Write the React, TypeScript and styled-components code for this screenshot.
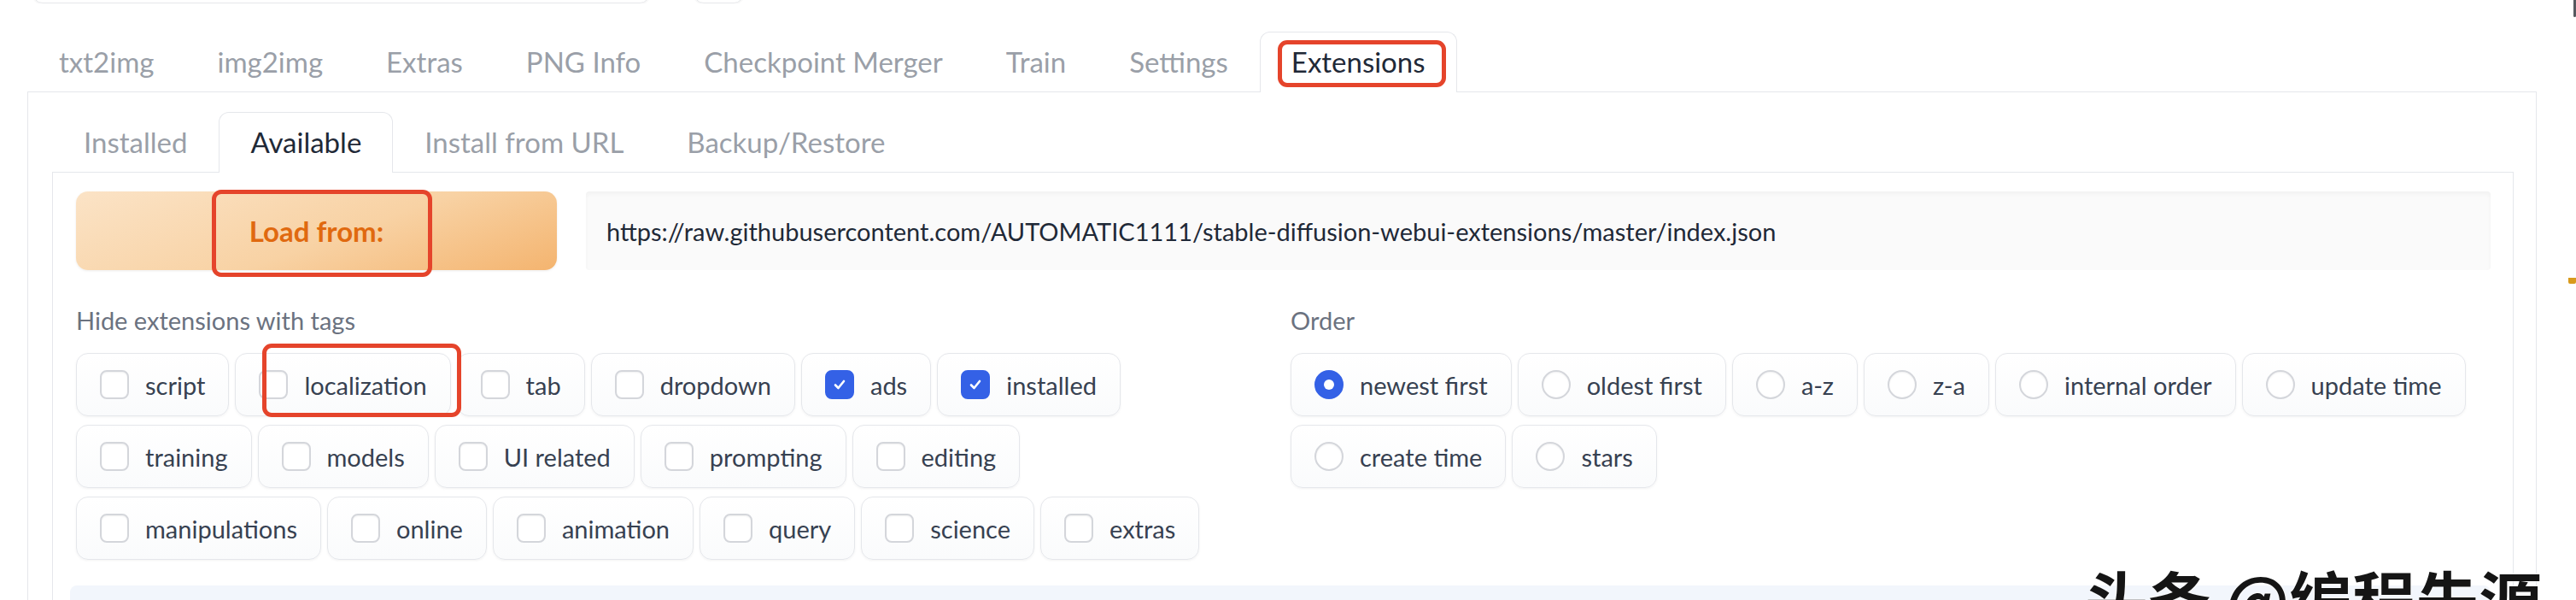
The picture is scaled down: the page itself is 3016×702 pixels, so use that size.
import styled, { createGlobalStyle } from 'styled-components';

const GlobalStyle = createGlobalStyle`
  html, body {
    margin: 0;
    padding: 0;
    background: #fff;
  }
  body {
    width: 3016px;
    height: 702px;
    overflow: hidden;
    font-family: Lato, "Liberation Sans", sans-serif;
    color: #1f2937;
  }
`;

const Page = styled.div`
  position: relative;
  width: 3016px;
  height: 702px;
  overflow: hidden;
  background: #fff;
`;

const TopStrip = styled.div`
  display: flex;
  align-items: flex-end;
  gap: 51px;
  height: 4px;
  padding-left: 38px;
  overflow: hidden;
`;

const GhostBox = styled.div<{ $w: number }>`
  flex: none;
  width: ${(p) => p.$w}px;
  height: 30px;
  border: 1px solid #e6e7ea;
  border-radius: 12px;
  box-shadow: 0 1px 2px rgba(0, 0, 0, 0.06);
`;

const TabRow = styled.div<{ $top: number; $left?: number }>`
  display: flex;
  align-items: flex-end;
  margin-top: ${(p) => p.$top}px;
  margin-bottom: -1px;
  padding-left: ${(p) => p.$left ?? 0}px;
  position: relative;
  z-index: 1;
`;

const Tab = styled.div<{ $active?: boolean }>`
  position: relative;
  display: flex;
  align-items: center;
  box-sizing: border-box;
  height: 71px;
  padding: 0 36px 2px;
  font-size: 33px;
  white-space: nowrap;
  border: 1px solid ${(p) => (p.$active ? '#e5e7eb' : 'transparent')};
  border-bottom: none;
  border-radius: 12px 12px 0 0;
  background: ${(p) => (p.$active ? '#fff' : 'transparent')};
  color: ${(p) => (p.$active ? '#1f2937' : '#9a9fa8')};
`;

const Annotation = styled.span<{ $l: number; $t: number; $w: number; $h: number }>`
  position: absolute;
  left: ${(p) => p.$l}px;
  top: ${(p) => p.$t}px;
  width: ${(p) => p.$w}px;
  height: ${(p) => p.$h}px;
  box-sizing: border-box;
  border: 5px solid #e5442b;
  border-radius: 11px;
  pointer-events: none;
  z-index: 3;
`;

const OuterPanel = styled.div`
  margin-left: 32px;
  width: 2938px;
  height: 620px;
  box-sizing: border-box;
  border: 1px solid #e5e7eb;
  border-bottom: none;
  padding: 23px 26px 0 28px;
`;

const InnerPanel = styled.div`
  box-sizing: border-box;
  height: 560px;
  border: 1px solid #e5e7eb;
  border-bottom: none;
  padding: 22px 26px 0 27px;
`;

const LoadRow = styled.div`
  display: flex;
  gap: 34px;
  height: 92px;
`;

const LoadButton = styled.div`
  position: relative;
  flex: none;
  width: 563px;
  display: flex;
  align-items: center;
  justify-content: center;
  border-radius: 14px;
  background: linear-gradient(160deg, #fbe3c6 0%, #f8d2a4 55%, #f4b46f 100%);
  box-shadow: 0 1px 3px rgba(0, 0, 0, 0.08);
  color: #e0690f;
  font-size: 33px;
  font-weight: 700;
`;

const UrlBox = styled.div`
  flex: 1;
  display: flex;
  align-items: center;
  padding-left: 24px;
  background: #fafafa;
  border-radius: 4px;
  box-shadow: inset 0 3px 5px rgba(0, 0, 0, 0.035);
  font-size: 29px;
  color: #1f2937;
`;

const Columns = styled.div`
  display: grid;
  grid-template-columns: 1405px 1405px;
  gap: 17px;
  margin-top: 39px;
`;

const Label = styled.div`
  font-size: 29px;
  line-height: 40px;
  color: #6b7280;
  margin-bottom: 18px;
`;

const ChipRows = styled.div`
  display: flex;
  flex-direction: column;
  gap: 10px;
`;

const ChipRow = styled.div`
  display: flex;
  gap: 7px;
`;

const Chip = styled.div`
  position: relative;
  display: flex;
  align-items: center;
  gap: 19px;
  box-sizing: border-box;
  height: 74px;
  padding: 0 27px;
  border: 1px solid #e5e7eb;
  border-radius: 14px;
  background: linear-gradient(to bottom, #ffffff, #fafbfc);
  box-shadow: 0 1px 3px rgba(0, 0, 0, 0.05);
  font-size: 29px;
  color: #374151;
  white-space: nowrap;
`;

const Box = styled.span<{ $checked?: boolean; $round?: boolean }>`
  flex: none;
  display: flex;
  align-items: center;
  justify-content: center;
  box-sizing: border-box;
  width: 34px;
  height: 34px;
  border-radius: ${(p) => (p.$round ? '50%' : '8px')};
  border: 2px solid ${(p) => (p.$checked ? '#3461e6' : '#d4d6db')};
  background: ${(p) => (p.$checked ? '#3461e6' : '#fff')};
  box-shadow: ${(p) => (p.$checked ? 'none' : 'inset 0 1px 2px rgba(0,0,0,0.06)')};
`;

const Dot = styled.span`
  width: 12px;
  height: 12px;
  border-radius: 50%;
  background: #fff;
`;

const Band = styled.div`
  margin: 30px 0 0 -7px;
  height: 40px;
  border-radius: 8px 8px 0 0;
  background: #f2f6fc;
`;

const Watermark = styled.div`
  position: absolute;
  left: 2441px;
  top: 662px;
  font-family: "Noto Sans CJK SC", sans-serif;
  font-size: 74px;
  font-weight: 700;
  line-height: 1;
  color: #151515;
  white-space: nowrap;
  text-shadow: 0 0 3px #fff, 0 0 2px #fff;
`;

const EdgeMark = styled.span<{ $top: number; $h: number; $color: string; $w: number }>`
  position: absolute;
  right: 0;
  top: ${(p) => p.$top}px;
  width: ${(p) => p.$w}px;
  height: ${(p) => p.$h}px;
  background: ${(p) => p.$color};
  border-radius: 0 0 2px 2px;
`;

const mainTabs = ['txt2img', 'img2img', 'Extras', 'PNG Info', 'Checkpoint Merger', 'Train', 'Settings', 'Extensions'];
const subTabs = ['Installed', 'Available', 'Install from URL', 'Backup/Restore'];

type Tag = { name: string; checked?: boolean; marked?: boolean };

const tagRows: Tag[][] = [
  [
    { name: 'script' },
    { name: 'localization', marked: true },
    { name: 'tab' },
    { name: 'dropdown' },
    { name: 'ads', checked: true },
    { name: 'installed', checked: true },
  ],
  [{ name: 'training' }, { name: 'models' }, { name: 'UI related' }, { name: 'prompting' }, { name: 'editing' }],
  [
    { name: 'manipulations' },
    { name: 'online' },
    { name: 'animation' },
    { name: 'query' },
    { name: 'science' },
    { name: 'extras' },
  ],
];

const orderRows = [
  ['newest first', 'oldest first', 'a-z', 'z-a', 'internal order', 'update time'],
  ['create time', 'stars'],
];

function Check() {
  return (
    <svg width="18" height="18" viewBox="0 0 18 18">
      <polyline points="4 9.5 7.5 13 14 5" fill="none" stroke="#fff" strokeWidth="2.6" strokeLinecap="round" strokeLinejoin="round" />
    </svg>
  );
}

export default function App() {
  return (
    <Page>
      <GlobalStyle />
      <TopStrip>
        <GhostBox $w={721} />
        <GhostBox $w={57} />
      </TopStrip>

      <TabRow $top={33} $left={32}>
        {mainTabs.map((t) => (
          <Tab key={t} $active={t === 'Extensions'}>
            {t}
            {t === 'Extensions' && <Annotation $l={20} $t={9} $w={197} $h={55} />}
          </Tab>
        ))}
      </TabRow>

      <OuterPanel>
        <TabRow $top={0}>
          {subTabs.map((t) => (
            <Tab key={t} $active={t === 'Available'}>
              {t}
            </Tab>
          ))}
        </TabRow>

        <InnerPanel>
          <LoadRow>
            <LoadButton>
              Load from:
              <Annotation $l={159} $t={-2} $w={258} $h={102} />
            </LoadButton>
            <UrlBox>https://raw.githubusercontent.com/AUTOMATIC1111/stable-diffusion-webui-extensions/master/index.json</UrlBox>
          </LoadRow>

          <Columns>
            <div>
              <Label>Hide extensions with tags</Label>
              <ChipRows>
                {tagRows.map((row, i) => (
                  <ChipRow key={i}>
                    {row.map((tag) => (
                      <Chip key={tag.name}>
                        <Box $checked={tag.checked}>{tag.checked && <Check />}</Box>
                        {tag.name}
                        {tag.marked && <Annotation $l={31} $t={-12} $w={233} $h={86} />}
                      </Chip>
                    ))}
                  </ChipRow>
                ))}
              </ChipRows>
            </div>
            <div>
              <Label>Order</Label>
              <ChipRows>
                {orderRows.map((row, i) => (
                  <ChipRow key={i}>
                    {row.map((name) => {
                      const on = name === 'newest first';
                      return (
                        <Chip key={name}>
                          <Box $round $checked={on}>{on && <Dot />}</Box>
                          {name}
                        </Chip>
                      );
                    })}
                  </ChipRow>
                ))}
              </ChipRows>
            </div>
          </Columns>

          <Band />
        </InnerPanel>
      </OuterPanel>

      <Watermark>头条 @编程先源</Watermark>
      <EdgeMark $top={0} $h={20} $w={3} $color="#55585e" />
      <EdgeMark $top={325} $h={7} $w={9} $color="#d99a1c" />
    </Page>
  );
}
